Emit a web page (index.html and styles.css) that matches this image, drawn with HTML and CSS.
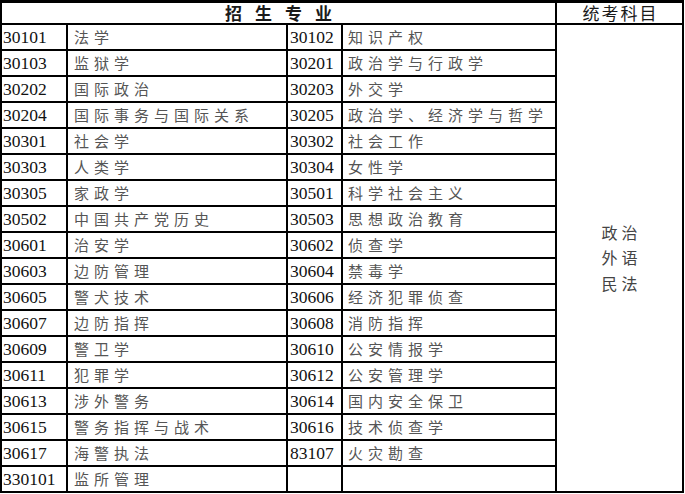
FILE: index.html
```html
<!DOCTYPE html>
<html lang="zh-CN">
<head>
<meta charset="utf-8">
<title>招生专业</title>
<link rel="stylesheet" href="styles.css">
</head>
<body>
<div class="sheet">
  <div class="cell head head-major">招生专业</div>
  <div class="cell head head-exam">统考科目</div>
  <div class="cell exam">
    <span>政治</span><span>外语</span><span>民法</span>
  </div>

  <div class="cell code">30101</div><div class="cell name">法学</div><div class="cell code code2">30102</div><div class="cell name name2">知识产权</div>
  <div class="cell code">30103</div><div class="cell name">监狱学</div><div class="cell code code2">30201</div><div class="cell name name2">政治学与行政学</div>
  <div class="cell code">30202</div><div class="cell name">国际政治</div><div class="cell code code2">30203</div><div class="cell name name2">外交学</div>
  <div class="cell code">30204</div><div class="cell name">国际事务与国际关系</div><div class="cell code code2">30205</div><div class="cell name name2">政治学、经济学与哲学</div>
  <div class="cell code">30301</div><div class="cell name">社会学</div><div class="cell code code2">30302</div><div class="cell name name2">社会工作</div>
  <div class="cell code">30303</div><div class="cell name">人类学</div><div class="cell code code2">30304</div><div class="cell name name2">女性学</div>
  <div class="cell code">30305</div><div class="cell name">家政学</div><div class="cell code code2">30501</div><div class="cell name name2">科学社会主义</div>
  <div class="cell code">30502</div><div class="cell name">中国共产党历史</div><div class="cell code code2">30503</div><div class="cell name name2">思想政治教育</div>
  <div class="cell code">30601</div><div class="cell name">治安学</div><div class="cell code code2">30602</div><div class="cell name name2">侦查学</div>
  <div class="cell code">30603</div><div class="cell name">边防管理</div><div class="cell code code2">30604</div><div class="cell name name2">禁毒学</div>
  <div class="cell code">30605</div><div class="cell name">警犬技术</div><div class="cell code code2">30606</div><div class="cell name name2">经济犯罪侦查</div>
  <div class="cell code">30607</div><div class="cell name">边防指挥</div><div class="cell code code2">30608</div><div class="cell name name2">消防指挥</div>
  <div class="cell code">30609</div><div class="cell name">警卫学</div><div class="cell code code2">30610</div><div class="cell name name2">公安情报学</div>
  <div class="cell code">30611</div><div class="cell name">犯罪学</div><div class="cell code code2">30612</div><div class="cell name name2">公安管理学</div>
  <div class="cell code">30613</div><div class="cell name">涉外警务</div><div class="cell code code2">30614</div><div class="cell name name2">国内安全保卫</div>
  <div class="cell code">30615</div><div class="cell name">警务指挥与战术</div><div class="cell code code2">30616</div><div class="cell name name2">技术侦查学</div>
  <div class="cell code">30617</div><div class="cell name">海警执法</div><div class="cell code code2">83107</div><div class="cell name name2">火灾勘查</div>
  <div class="cell code">330101</div><div class="cell name">监所管理</div><div class="cell code code2"></div><div class="cell name name2"></div>
</div>
</body>
</html>
```

FILE: styles.css
```css
html, body {
  margin: 0;
  padding: 0;
  background: #fff;
}

.sheet {
  display: grid;
  grid-template-columns: 64px 218px 53px 212px 125px;
  grid-template-rows: 20px repeat(18, 24px);
  gap: 2px;
  padding: 3px 2px 2px 2px;
  background: #000;
  width: max-content;
}

.cell {
  background: #fff;
  display: flex;
  align-items: center;
  white-space: nowrap;
  line-height: 20px;
}

.head {
  justify-content: center;
  font-family: "Noto Sans CJK SC", sans-serif;
  color: #1a1a1a;
}

.head-major {
  grid-column: 1 / 5;
  font-size: 17px;
  font-weight: 700;
  letter-spacing: 13px;
  padding-left: 13px;
}

.head-exam {
  grid-column: 5;
  font-size: 17px;
  letter-spacing: 2px;
  padding-left: 2px;
}

.exam {
  grid-column: 5;
  grid-row: 2 / span 18;
  flex-direction: column;
  justify-content: center;
  font-family: "Noto Sans CJK SC", sans-serif;
  font-size: 16px;
  line-height: 25.5px;
  letter-spacing: 4px;
  padding-left: 4px;
  color: #444;
}

.code {
  font-family: "Liberation Serif", "Times New Roman", serif;
  font-size: 17.5px;
  color: #111;
  padding-left: 1px;
}

.code2 {
  padding-left: 2px;
}

.name {
  font-family: "Noto Sans CJK SC", sans-serif;
  font-size: 15px;
  letter-spacing: 5px;
  color: #555;
  padding-left: 6px;
}

.name2 {
  padding-left: 5px;
}
```
